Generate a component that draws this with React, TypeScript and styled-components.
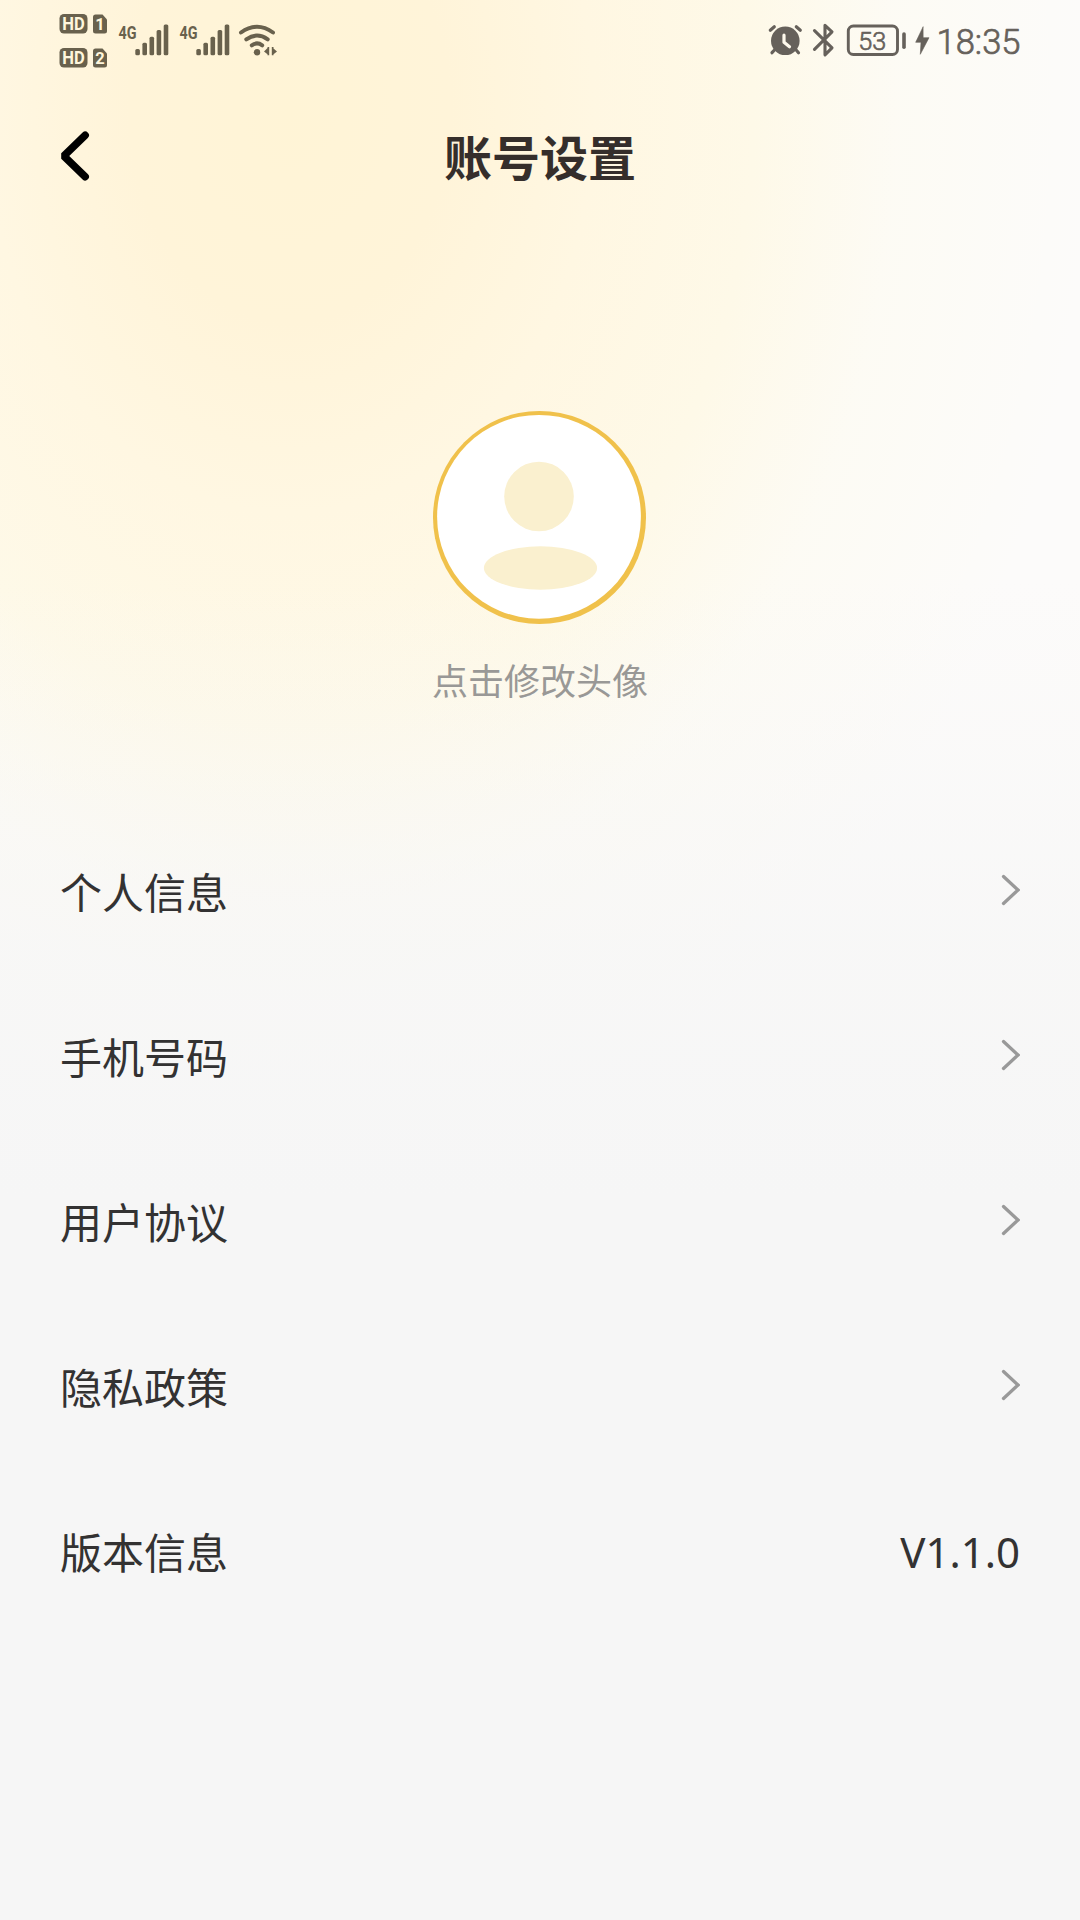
import React from "react";
import styled, { createGlobalStyle } from "styled-components";

const ink = "#333232";
const statusInk = "#69614d";
const statusInkRight = "#66615b";
const cjk = `"Noto Sans", "Noto Sans CJK SC", sans-serif`;

const GlobalStyle = createGlobalStyle`
  * { box-sizing: border-box; }
  body { margin: 0; background: #f6f6f6; }
`;

const Screen = styled.div`
  width: 1080px;
  height: 1920px;
  display: flex;
  flex-direction: column;
  overflow: hidden;
  color: ${ink};
  font-family: ${cjk};
  background:
    linear-gradient(180deg, rgba(246, 246, 246, 0) 580px, rgba(246, 246, 246, 0.25) 740px, rgba(246, 246, 246, 0.7) 940px, #f6f6f6 1200px),
    radial-gradient(ellipse 800px 1060px at 290px 110px, #fff4d6 0%, #fff4d9 20%, #fff7e2 38%, #fef9e8 58%, rgba(253, 251, 243, 0.8) 76%, rgba(252, 251, 250, 0) 100%),
    #fcfbfa;
`;

const StatusBar = styled.div`
  height: 80px;
  display: flex;
  justify-content: space-between;
  padding: 0 50px 0 50px;
`;

const StatusArt = styled.svg`
  display: block;
  height: 80px;
  font-family: Roboto, sans-serif;
`;

const StatusEnd = styled.div`
  display: flex;
  color: ${statusInkRight};
`;

const Header = styled.header`
  height: 152px;
  display: grid;
  grid-template-columns: 120px 1fr 120px;
  align-items: center;
  padding: 0 60px;
`;

const BackButton = styled.button`
  display: flex;
  padding: 0;
  border: 0;
  background: none;
`;

const Title = styled.h1`
  margin: 0 0 3px;
  text-align: center;
  font: 700 48px/72px "Noto Sans CJK SC", sans-serif;
  color: #352e2b;
`;

const AvatarSection = styled.section`
  height: 577px;
  padding-top: 178px;
  display: flex;
  flex-direction: column;
  align-items: center;
`;

const AvatarArt = styled.svg`
  display: block;
  width: 216px;
  height: 216px;
`;

const Caption = styled.span`
  margin-top: 26px;
  font: 400 36px/54px "Noto Sans CJK SC", sans-serif;
  color: #999896;
`;

const List = styled.ul`
  margin: 0;
  padding: 0 60px;
  list-style: none;
`;

const Row = styled.li`
  height: 165px;
  display: flex;
  align-items: center;
  justify-content: space-between;
`;

const Label = styled.span`
  margin-bottom: 2px;
  font: 400 42px/62px "Noto Sans CJK SC", sans-serif;
`;

const Value = styled.span`
  font: 400 42px/62px "Noto Sans", sans-serif;
`;

const ChevronArt = styled.svg`
  display: block;
  width: 20px;
  height: 34px;
  margin-bottom: 4px;
`;

function Sim({ y, n }: { y: number; n: string }) {
  return (
    <g fill={statusInk}>
      <rect x="59.5" y={y} width="28" height="19.5" rx="4.5" />
      <path d={`M95.500 ${y + 0.5}H102.500L107 ${y + 5.500}V${y + 17}Q107 ${y + 19.500} 104.500 ${y + 19.500}H95.500Q93 ${y + 19.500} 93 ${y + 17}V${y + 3}Q93 ${y + 0.500} 95.500 ${y + 0.500}Z`} />
      <text x="62.300" y={y + 15.800} fontSize="17.500" fontWeight="700" fill="#fff6dc" textLength="22.500" lengthAdjust="spacingAndGlyphs">HD</text>
      <text x="100" y={y + 16} fontSize="16.500" fontWeight="700" fill="#fff6dc" textAnchor="middle">{n}</text>
    </g>
  );
}

function Signal({ x }: { x: number }) {
  const tops = [49, 42.7, 36.7, 30, 24.5];
  return (
    <g fill={statusInk}>
      <text x={x} y="38.500" fontSize="19" fontWeight="700" textLength="18" lengthAdjust="spacingAndGlyphs">4G</text>
      {tops.map((top, i) => (
        <rect key={top} x={x + 16.8 + i * 7.1} y={top} width="4.600" height={55.3 - top} rx="1.500" />
      ))}
    </g>
  );
}

function Connectivity() {
  return (
    <StatusArt width="240" viewBox="50 0 240 80">
      <Sim y={14} n="1" />
      <Sim y={48} n="2" />
      <Signal x={118.5} />
      <Signal x={179.5} />
      <g fill="none" stroke={statusInk} strokeWidth="4" strokeLinecap="round">
        <path d="M241 32.500Q257 21 273 32.500" />
        <path d="M246.300 39.300Q257 31.800 267.700 39.300" />
        <path d="M251.800 45.300Q257 41.500 262.200 45.300" />
      </g>
      <circle cx="257" cy="52.300" r="3.200" fill={statusInk} />
      <path d="M264 51.500L267.500 48V47H269.200V55.300H267.500V54.200ZM271.800 47H273.500V48.500L277 51.500L273.500 54.300V55.300H271.800Z" fill={statusInk} />
    </StatusArt>
  );
}

function Power() {
  return (
    <StatusArt width="280" viewBox="750 0 280 80" fill="none" stroke={statusInkRight} strokeLinecap="round" strokeLinejoin="round">
      <circle cx="785.300" cy="40.800" r="14.300" fill={statusInkRight} stroke="none" />
      <path d="M770.300 30.200L774.300 26.800M796.300 26.800L800.300 30.200M774 50.500L772 52.700M796.600 50.500L798.500 52.700" strokeWidth="3.200" />
      <path d="M784 35.200V42.300L789.500 46.800" stroke="#fef9ec" strokeWidth="3.200" />
      <path d="M814.500 30.700L832 47.800L825 54.800V25.300L832 31.800L814.500 49.300" strokeWidth="3.100" />
      <rect x="848.300" y="26" width="49.200" height="28.500" rx="5" strokeWidth="2.900" />
      <path d="M904 34V47.300" strokeWidth="3.600" />
      <path d="M923 27L915.700 42.300H921L920.300 54.300L929 37.700H923.300Z" fill={statusInkRight} stroke={statusInkRight} strokeWidth="0.600" />
      <g fill={statusInkRight} strokeWidth="0.700">
        <text x="858.300" y="50.200" fontSize="26.500" fontWeight="300" textLength="28" lengthAdjust="spacingAndGlyphs">53</text>
        <text x="936.500" y="54" fontSize="34.500" fontWeight="300" textLength="84" lengthAdjust="spacingAndGlyphs">18:35</text>
      </g>
    </StatusArt>
  );
}

function Avatar() {
  return (
    <AvatarArt viewBox="432 410 216 216">
      <circle cx="539.500" cy="517.500" r="106.500" fill="#f0c14b" />
      <circle cx="539" cy="516.800" r="101.900" fill="#fff" />
      <circle cx="539" cy="496.500" r="34.800" fill="#faf0cf" />
      <ellipse cx="540.500" cy="568" rx="56.600" ry="21.700" fill="#faf0cf" />
    </AvatarArt>
  );
}

function Chevron() {
  return (
    <ChevronArt viewBox="1000 873 20 34" fill="none" stroke="#999" strokeWidth="3.300" strokeLinecap="round">
      <path d="M1003.500 876.500L1018 890L1003.500 903.500" />
    </ChevronArt>
  );
}

const items: { label: string; value?: string }[] = [
  { label: "个人信息" },
  { label: "手机号码" },
  { label: "用户协议" },
  { label: "隐私政策" },
  { label: "版本信息", value: "V1.1.0" },
];

export default function App() {
  return (
    <>
      <GlobalStyle />
      <Screen>
        <StatusBar>
          <Connectivity />
          <StatusEnd>
            <Power />
          </StatusEnd>
        </StatusBar>
        <Header>
          <BackButton aria-label="返回">
            <svg width="30" height="50" viewBox="60 131 30 50" fill="none" stroke="#000" strokeWidth="7.500" strokeLinecap="round" strokeLinejoin="bevel">
              <path d="M85.200 135.300L63.800 156L85.200 176.700" />
            </svg>
          </BackButton>
          <Title>账号设置</Title>
        </Header>
        <AvatarSection>
          <Avatar />
          <Caption>点击修改头像</Caption>
        </AvatarSection>
        <List>
          {items.map((item) => (
            <Row key={item.label}>
              <Label>{item.label}</Label>
              {item.value ? <Value>{item.value}</Value> : <Chevron />}
            </Row>
          ))}
        </List>
      </Screen>
    </>
  );
}
